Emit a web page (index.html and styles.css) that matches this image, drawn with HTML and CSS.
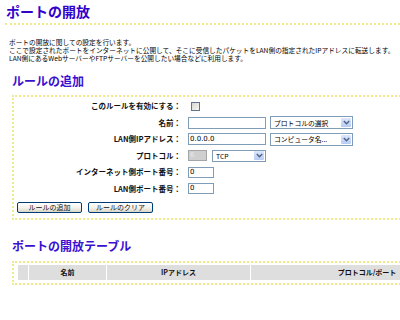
FILE: index.html
```html
<!DOCTYPE html>
<html lang="ja">
<head>
<meta charset="utf-8">
<title>ポートの開放</title>
<link rel="stylesheet" href="styles.css">
</head>
<body>
<div class="page">
  <h1 class="title">ポートの開放</h1>
  <div class="sep"></div>
  <div class="desc">
    <p class="desc-line">ポートの開放に関しての設定を行います。</p>
    <p class="desc-line">ここで設定されたポートをインターネットに公開して、そこに受信したパケットをLAN側の指定されたIPアドレスに転送します。</p>
    <p class="desc-line">LAN側にあるWebサーバーやFTPサーバーを公開したい場合などに利用します。</p>
  </div>

  <h2 class="section">ルールの追加</h2>
  <div class="box form-box">
    <div class="form-grid">
      <div class="lbl">このルールを有効にする：</div>
      <div class="ctl"><span class="checkbox"></span></div>

      <div class="lbl">名前：</div>
      <div class="ctl">
        <span class="input w-name"></span>
        <span class="select w-sel"><span class="sel-text">プロトコルの選択</span><span class="arrow"><svg width="7" height="5" viewBox="0 0 7 5"><path d="M0.8 1 L3.5 3.7 L6.2 1" fill="none" stroke="#4d6185" stroke-width="1.4"/></svg></span></span>
      </div>

      <div class="lbl">LAN側IPアドレス：</div>
      <div class="ctl">
        <span class="input w-name">0.0.0.0</span>
        <span class="select w-sel"><span class="sel-text">コンピュータ名...</span><span class="arrow"><svg width="7" height="5" viewBox="0 0 7 5"><path d="M0.8 1 L3.5 3.7 L6.2 1" fill="none" stroke="#4d6185" stroke-width="1.4"/></svg></span></span>
      </div>

      <div class="lbl">プロトコル：</div>
      <div class="ctl">
        <span class="input disabled">6</span>
        <span class="select w-tcp"><span class="sel-text">TCP</span><span class="arrow"><svg width="7" height="5" viewBox="0 0 7 5"><path d="M0.8 1 L3.5 3.7 L6.2 1" fill="none" stroke="#4d6185" stroke-width="1.4"/></svg></span></span>
      </div>

      <div class="lbl">インターネット側ポート番号：</div>
      <div class="ctl"><span class="input w-port">0</span></div>

      <div class="lbl">LAN側ポート番号：</div>
      <div class="ctl"><span class="input w-port">0</span></div>
    </div>
    <div class="buttons">
      <button class="btn" type="button">ルールの追加</button>
      <button class="btn" type="button">ルールのクリア</button>
    </div>
  </div>

  <h2 class="section section-2">ポートの開放テーブル</h2>
  <div class="box table-box">
    <div class="thead">
      <div class="th"></div>
      <div class="th">名前</div>
      <div class="th">IPアドレス</div>
      <div class="th">プロトコル/ポート</div>
    </div>
  </div>
</div>
</body>
</html>
```

FILE: styles.css
```css
html { overflow: hidden; }
body {
  margin: 0;
  font-family: "Noto Sans CJK JP", "Noto Sans", sans-serif;
  color: #000;
  background: #fff;
}
.page {
  width: 520px;
  padding-top: 2px;
}
.title {
  margin: 0 0 0 6px;
  font-size: 14px;
  line-height: 18px;
  font-weight: bold;
  color: #3300cc;
}
.sep {
  margin: 3px 0 0 5px;
  border-top: 2px dotted #f0ea8a;
}
.desc {
  margin: 13px 0 0 9px;
}
.desc-line {
  margin: 0;
  height: 8px;
  font-size: 6.7px;
  line-height: 8px;
  color: #000;
  white-space: nowrap;
}
.section {
  margin: 11px 0 0 12px;
  font-size: 12px;
  line-height: 16px;
  font-weight: bold;
  color: #3a10d0;
}
.section-2 { margin-top: 18px; }
.box {
  margin: 6px 0 0 12px;
  border: 2px dotted #f0ea8a;
  width: 480px;
}
.form-box { padding: 1px 0 5px 0; }
.form-grid {
  display: grid;
  grid-template-columns: 167px 1fr;
  grid-auto-rows: 16.5px;
  column-gap: 7px;
  align-items: center;
}
.lbl {
  text-align: right;
  font-size: 7.5px;
  font-weight: bold;
  line-height: 10px;
  color: #111;
}
.ctl {
  display: flex;
  align-items: center;
  gap: 4px;
}
.checkbox {
  box-sizing: border-box;
  width: 9px;
  height: 9px;
  margin-left: 3px;
  border: 1px solid #5f7590;
  background: linear-gradient(135deg, #d8d8d2, #f6f6f4);
}
.input {
  box-sizing: border-box;
  height: 12px;
  border: 1px solid #7f9db9;
  background: #fff;
  font-size: 7px;
  line-height: 10px;
  padding: 0 1px;
  color: #000;
  font-family: "DejaVu Sans", sans-serif;
}
.w-name { width: 78px; }
.w-port { width: 26px; height: 11px; line-height: 9px; }
.disabled {
  width: 19px;
  height: 11px;
  margin-right: 1px;
  background: #cfcfcf;
  border-color: #a5a5a5;
  color: #e8e8e8;
  line-height: 9px;
}
.select {
  box-sizing: border-box;
  display: flex;
  align-items: center;
  justify-content: space-between;
  height: 13px;
  border: 1px solid #7f9db9;
  background: #fff;
  padding: 0 1px 0 3px;
}
.w-sel { width: 83px; }
.w-tcp { width: 54px; height: 12px; }
.sel-text {
  font-size: 6.8px;
  line-height: 10px;
  color: #000;
}
.arrow {
  display: flex;
  align-items: center;
  justify-content: center;
  width: 10px;
  height: 9px;
  background: linear-gradient(#dce7fb, #b6cbf3);
  border-radius: 1px;
}
.buttons {
  display: flex;
  gap: 6px;
  margin-top: 5px;
  padding-left: 3px;
}
.btn {
  box-sizing: border-box;
  width: 65px;
  height: 11px;
  padding: 0;
  border: 1px solid #003c74;
  border-radius: 2px;
  background: linear-gradient(#ffffff, #f2f1ea 55%, #d9d5c9);
  font-family: "Noto Sans CJK JP", sans-serif;
  font-size: 7px;
  line-height: 9px;
  color: #111;
}
.table-box {
  margin-top: 7px;
  padding: 2px 0 3px 4px;
}
.thead {
  display: grid;
  grid-template-columns: 10px 77px 143px 232px;
  column-gap: 1px;
  height: 15px;
}
.th {
  background: #dedede;
  font-size: 7px;
  font-weight: bold;
  line-height: 15px;
  text-align: center;
  color: #111;
}
```
